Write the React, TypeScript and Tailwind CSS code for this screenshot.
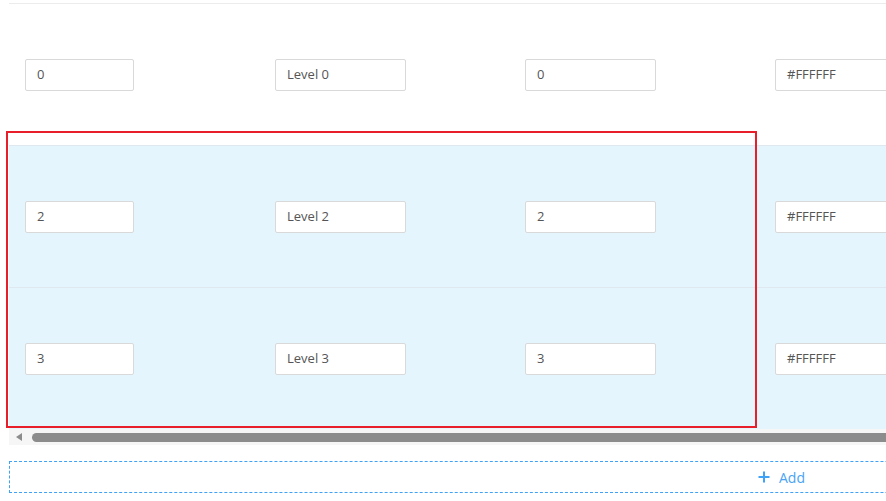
import React from "react";

const rows = [
  { id: "0", name: "Level 0", val: "0", color: "#FFFFFF", sel: false },
  { id: "2", name: "Level 2", val: "2", color: "#FFFFFF", sel: true },
  { id: "3", name: "Level 3", val: "3", color: "#FFFFFF", sel: true },
];

function Cell({ value, w }: { value: string; w: string }) {
  return (
    <div className="w-[250px] shrink-0 pl-[16px] flex items-center">
      <div
        className={`${w} h-[32px] shrink-0 bg-white border border-[#d9d9d9] rounded-[2px] flex items-center pl-[11px] text-[13px] text-[#555]`}
      >
        {value}
      </div>
    </div>
  );
}

export default function App() {
  return (
    <div
      className="relative w-[886px] h-[501px] overflow-hidden bg-white"
      style={{ fontFamily: '"Open Sans", "Noto Sans", sans-serif' }}
    >
      <div className="pl-[9px] pt-[3px]">
        <div className="border-t border-[#ececec] w-[1200px]">
          {rows.map((r, i) => (
            <div
              key={r.id}
              className={`flex ${i > 0 ? "h-[142px] border-t border-[#dfe8ee]" : "h-[141px]"} ${
                r.sel ? "bg-[#e4f5fe]" : "bg-white"
              }`}
            >
              <Cell value={r.id} w="w-[109px]" />
              <Cell value={r.name} w="w-[131px]" />
              <Cell value={r.val} w="w-[131px]" />
              <Cell value={r.color} w="w-[131px]" />
            </div>
          ))}
        </div>
        <div className="h-[16px] bg-[#f6f6f6] flex items-center w-[1200px]">
          <div className="ml-[7px] w-0 h-0 border-y-[4px] border-y-transparent border-r-[6px] border-r-[#8c8c8c]" />
          <div className="ml-[10px] h-[9px] flex-1 bg-[#8c8c8c] rounded-l-full" />
        </div>
        <div className="mt-[16px] h-[32px] w-[1200px] border border-dashed border-[#3ea2f7] flex items-center pl-[748px] text-[14px] text-[#4aa3f5]">
          <svg width="12" height="12" viewBox="0 0 12 12" className="mr-[9px]">
            <path d="M6 0.5v11M0.5 6h11" stroke="#3ea2f7" strokeWidth="2" />
          </svg>
          Add
        </div>
      </div>
      <div className="absolute left-[6px] top-[131px] w-[751px] h-[297px] border-2 border-[#e81e2a] pointer-events-none" />
    </div>
  );
}
